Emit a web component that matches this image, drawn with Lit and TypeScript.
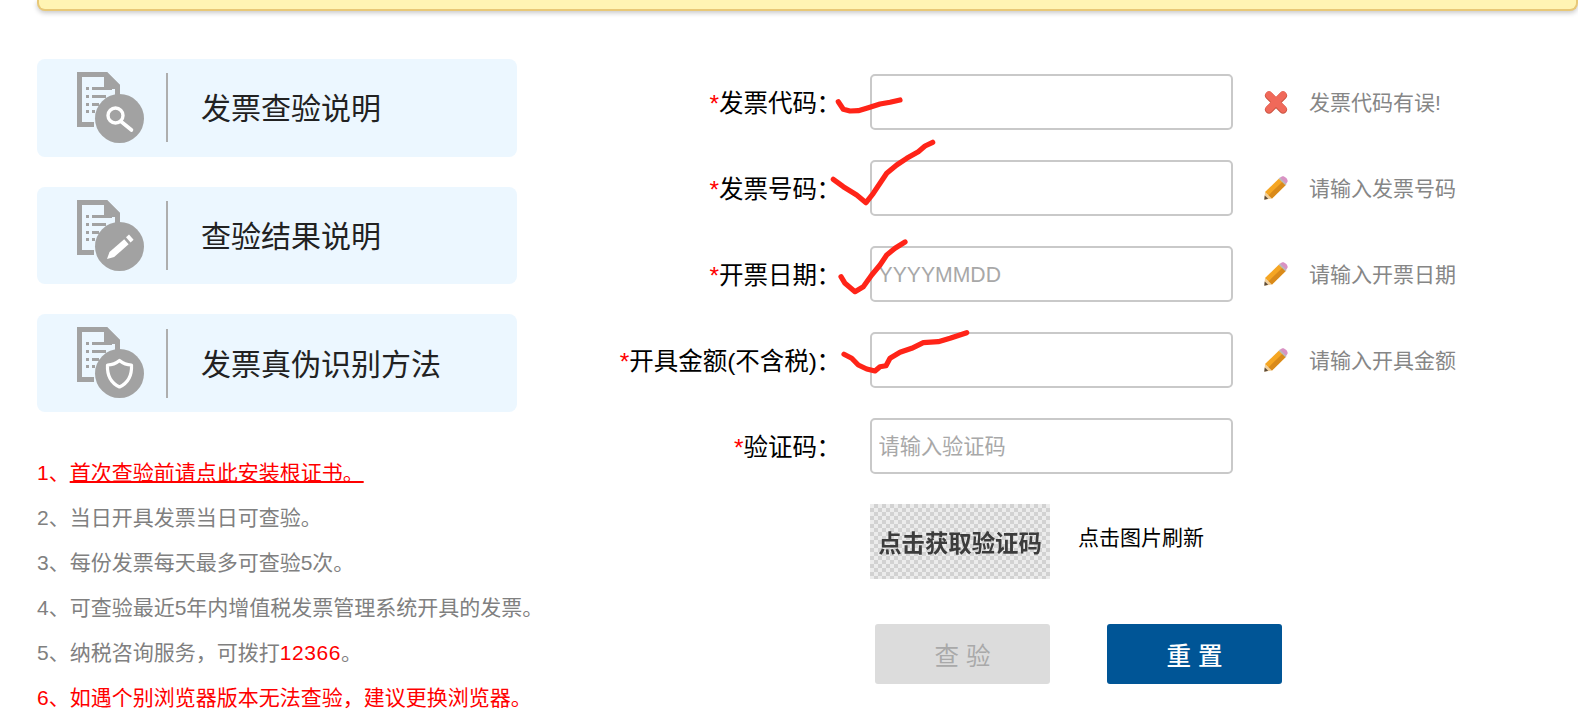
import { LitElement, html, css, svg } from "lit";
import { customElement } from "lit/decorators.js";

const docBase = svg`
  <path fill-rule="evenodd" d="M0 0H30L43 13V27H38V17H27V5H5V50H17V55H0Z" fill="#a2a2a2"/>
  <path d="M30 0L43 13H30Z" fill="#a2a2a2"/>
  <g fill="#a2a2a2">
    <rect x="9" y="15" width="3" height="3"/><rect x="15" y="15" width="20" height="3"/>
    <rect x="9" y="23" width="3" height="3"/><rect x="15" y="23" width="14" height="3"/>
    <rect x="9" y="31" width="3" height="3"/><rect x="15" y="31" width="7" height="3"/>
    <rect x="9" y="38" width="3" height="3"/><rect x="15" y="38" width="3" height="3"/>
  </g>
  <circle cx="42.5" cy="46.5" r="24.5" fill="#a2a2a2"/>
`;

const glyphs = [
  svg`<circle cx="38.5" cy="43.5" r="7.5" fill="none" stroke="#fff" stroke-width="3.4"/>
      <path d="M44 49.5L54.5 58" stroke="#fff" stroke-width="3.6" stroke-linecap="round"/>`,
  svg`<path d="M30 59L32.5 52L47.2 39.2L51.6 44.2L37.2 57Z" fill="#fff"/>
      <path d="M49 37.3L52 34.6L56.6 39.7L53.6 42.4Z" fill="#fff"/>`,
  svg`<path d="M42.5 33.5C46 36.5 50 38 54.5 38C55 48 51 56 42.5 60C34 56 30 48 30.5 38C35 38 39 36.5 42.5 33.5Z"
        fill="none" stroke="#fff" stroke-width="3.2" stroke-linejoin="round"/>`,
];

const crossIcon = svg`<svg class="status-icon" viewBox="0 0 24 24">
  <path d="M5 5L19 19M19 5L5 19" stroke="#c9523f" stroke-width="8" stroke-linecap="round" transform="translate(0 .6)"/>
  <path d="M5 5L19 19M19 5L5 19" stroke="#f0695a" stroke-width="7" stroke-linecap="round"/>
</svg>`;

const pencilIcon = svg`<svg class="status-icon" viewBox="0 0 24 24">
  <path d="M0.3 23.7L1 16L8 22.6Z" fill="#f0cf9c"/>
  <path d="M0.3 23.7L0.7 19.6L4.2 22.8Z" fill="#5a4a3a"/>
  <path d="M1 16L15 2.5L21.7 9L8 22.6Z" fill="#f5a623"/>
  <path d="M4.5 19.3L18.4 5.8L21.7 9L8 22.6Z" fill="#d98a1a"/>
  <path d="M15.5 2L17.8 0.4C19 -.2 20.5 .2 22 1.7C23.6 3.3 24 4.8 23.4 6L21.6 8.4Z" fill="#d992c4"/>
  <path d="M14.8 2.7L16 1.6L22.6 8L21.4 9.2Z" fill="#b9b9b9"/>
</svg>`;

const cards = ["发票查验说明", "查验结果说明", "发票真伪识别方法"];

const fields = [
  { label: "发票代码", ph: "", status: "发票代码有误!", err: true },
  { label: "发票号码", ph: "", status: "请输入发票号码" },
  { label: "开票日期", ph: "YYYYMMDD", status: "请输入开票日期" },
  { label: "开具金额(不含税)", ph: "", status: "请输入开具金额" },
  { label: "验证码", ph: "请输入验证码", status: "" },
];

const strokes = [
  "M838.3 101.7L843.3 109.3L850 111L858.3 110.7L868.3 107.7L880 104L890 102.3L900 100",
  "M833.3 179.3L843.3 186.7L856.7 195L866 202.7L873.3 193.3L880 183.3L886.7 173.3L896.7 165L906.7 158.3L918.3 151.7L925 146L932.7 142.3",
  "M841 276.7L845 283.3L855 291.7L863.3 286.7L871.7 275L880 265L886.7 255L895 248.3L905 242",
  "M844 354.3L851.7 358.3L858.3 365L866.7 369L875 371L880 366.7L886 365.7L890 358.3L900 352.3L911.7 348.3L923.3 342.7L938.3 341.7L950 338.3L966.7 332.7",
];

@customElement("app-root")
export class AppRoot extends LitElement {
  static styles = css`
    :host {
      display: block;
      position: relative;
      height: 709px;
      overflow: hidden;
      background: #fff;
      font-family: "Liberation Sans", "Noto Sans CJK SC", sans-serif;
    }
    .banner {
      height: 9px;
      margin-left: 37px;
      background: #fff4b3;
      border: 2px solid #e8c877;
      border-top: 0;
      border-radius: 0 0 8px 8px;
      box-shadow: 0 2px 5px rgba(0, 0, 0, 0.22);
    }
    .main {
      display: flex;
      align-items: flex-start;
      padding: 48px 0 0 37px;
    }
    .left {
      width: 480px;
      flex: none;
    }
    .card {
      display: flex;
      align-items: center;
      height: 97.8px;
      margin-bottom: 29.9px;
      padding-left: 40px;
      box-sizing: border-box;
      background: #ecf7ff;
      border-radius: 8px;
    }
    .doc {
      width: 89px;
      height: 72px;
      flex: none;
      filter: blur(0.3px);
    }
    .divider {
      width: 2px;
      height: 69px;
      background: #aeaeae;
      flex: none;
    }
    .card-title {
      margin: 0 0 3px 33px;
      font-size: 30px;
      color: #222;
    }
    .notes {
      margin: 37.6px -40px 0 0;
      padding: 0;
      list-style: none;
      font-size: 21px;
      line-height: 45px;
      color: #808080;
      white-space: nowrap;
    }
    .red {
      color: #f00;
    }
    .digits {
      letter-spacing: 0.6px;
    }
    .notes u {
      text-decoration-thickness: 1.5px;
    }
    .form {
      margin: 15px 0 0 83px;
      display: grid;
      grid-template-columns: 240px 363px auto;
      column-gap: 30px;
      row-gap: 30px;
      align-items: center;
      align-content: start;
      justify-items: start;
    }
    .label {
      justify-self: end;
      margin: 0 -1px 1px 0;
      font-size: 24.5px;
      color: #000;
      white-space: nowrap;
    }
    .label b {
      font-weight: 400;
      color: #f00;
    }
    .label i {
      font-style: normal;
      margin-left: -0.5px;
    }
    input {
      width: 100%;
      height: 56px;
      box-sizing: border-box;
      padding: 2px 6.5px 0;
      border: 2px solid #c9c9c9;
      border-radius: 5px;
      outline: none;
      font: 21.2px "Liberation Sans", "Noto Sans CJK SC", sans-serif;
      background: transparent;
    }
    input::placeholder {
      color: #a8a8a8;
      opacity: 1;
    }
    .status {
      display: flex;
      align-items: center;
      gap: 21px;
      margin-left: 1px;
      font-size: 21px;
      color: #868686;
      white-space: nowrap;
    }
    .status span {
      margin-bottom: 2px;
    }
    .status-icon {
      width: 24px;
      height: 24px;
      flex: none;
    }
    .captcha-row {
      display: flex;
      align-items: center;
      gap: 28px;
      font-size: 21px;
      color: #000;
      white-space: nowrap;
    }
    .captcha-row > span {
      margin-bottom: 12px;
    }
    .captcha {
      width: 180px;
      height: 75px;
      display: flex;
      align-items: center;
      justify-content: center;
      background: repeating-conic-gradient(#d2d2d2 0 25%, #ececec 0 50%) 0 0 / 8px 8px;
      font-family: "DejaVu Serif", "Noto Sans CJK SC", serif;
      font-size: 23.4px;
      font-weight: 700;
      color: #3c3c3c;
    }
    .captcha span {
      filter: blur(0.7px);
    }
    .buttons {
      display: flex;
      gap: 57px;
      margin: 15px 0 0 5px;
    }
    button {
      width: 175px;
      height: 60px;
      border: 0;
      border-radius: 3px;
      font: 24.5px "Liberation Sans", "Noto Sans CJK SC", sans-serif;
    }
    .check {
      background: #dcdcdc;
      color: #a9a9a9;
    }
    .reset {
      background: #005596;
      color: #fff;
      font-weight: 500;
    }
    .scribble {
      position: absolute;
      inset: 0;
      width: 1578px;
      height: 709px;
      pointer-events: none;
    }
    .scribble path {
      fill: none;
      stroke: #ff2418;
      stroke-width: 5.2;
      stroke-linecap: round;
      stroke-linejoin: round;
    }
  `;

  render() {
    return html`
      <div class="banner"></div>
      <div class="main">
        <div class="left">
          ${cards.map(
            (t, i) => html`<div class="card">
              <svg class="doc" viewBox="0 0 89 72">${docBase}${glyphs[i]}</svg>
              <div class="divider"></div>
              <div class="card-title">${t}</div>
            </div>`
          )}
          <ul class="notes">
            <li class="red">1、<u>首次查验前请点此安装根证书。</u></li>
            <li>2、当日开具发票当日可查验。</li>
            <li>3、每份发票每天最多可查验5次。</li>
            <li>4、可查验最近5年内增值税发票管理系统开具的发票。</li>
            <li>5、纳税咨询服务，可拨打<span class="red digits">12366</span>。</li>
            <li class="red">6、如遇个别浏览器版本无法查验，建议更换浏览器。</li>
          </ul>
        </div>
        <div class="form">
          ${fields.map(
            (f) => html`
              <div class="label"><b>*</b>${f.label}<i>：</i></div>
              <input placeholder=${f.ph} />
              ${f.status
                ? html`<div class="status">${f.err ? crossIcon : pencilIcon}<span>${f.status}</span></div>`
                : html`<div></div>`}
            `
          )}
          <div></div>
          <div class="captcha-row">
            <div class="captcha"><span>点击获取验证码</span></div>
            <span>点击图片刷新</span>
          </div>
          <div></div>
          <div></div>
          <div class="buttons">
            <button class="check">查 验</button>
            <button class="reset">重 置</button>
          </div>
        </div>
      </div>
      <svg class="scribble" viewBox="0 0 1578 709">
        ${strokes.map((d) => svg`<path d=${d}></path>`)}
      </svg>
    `;
  }
}
